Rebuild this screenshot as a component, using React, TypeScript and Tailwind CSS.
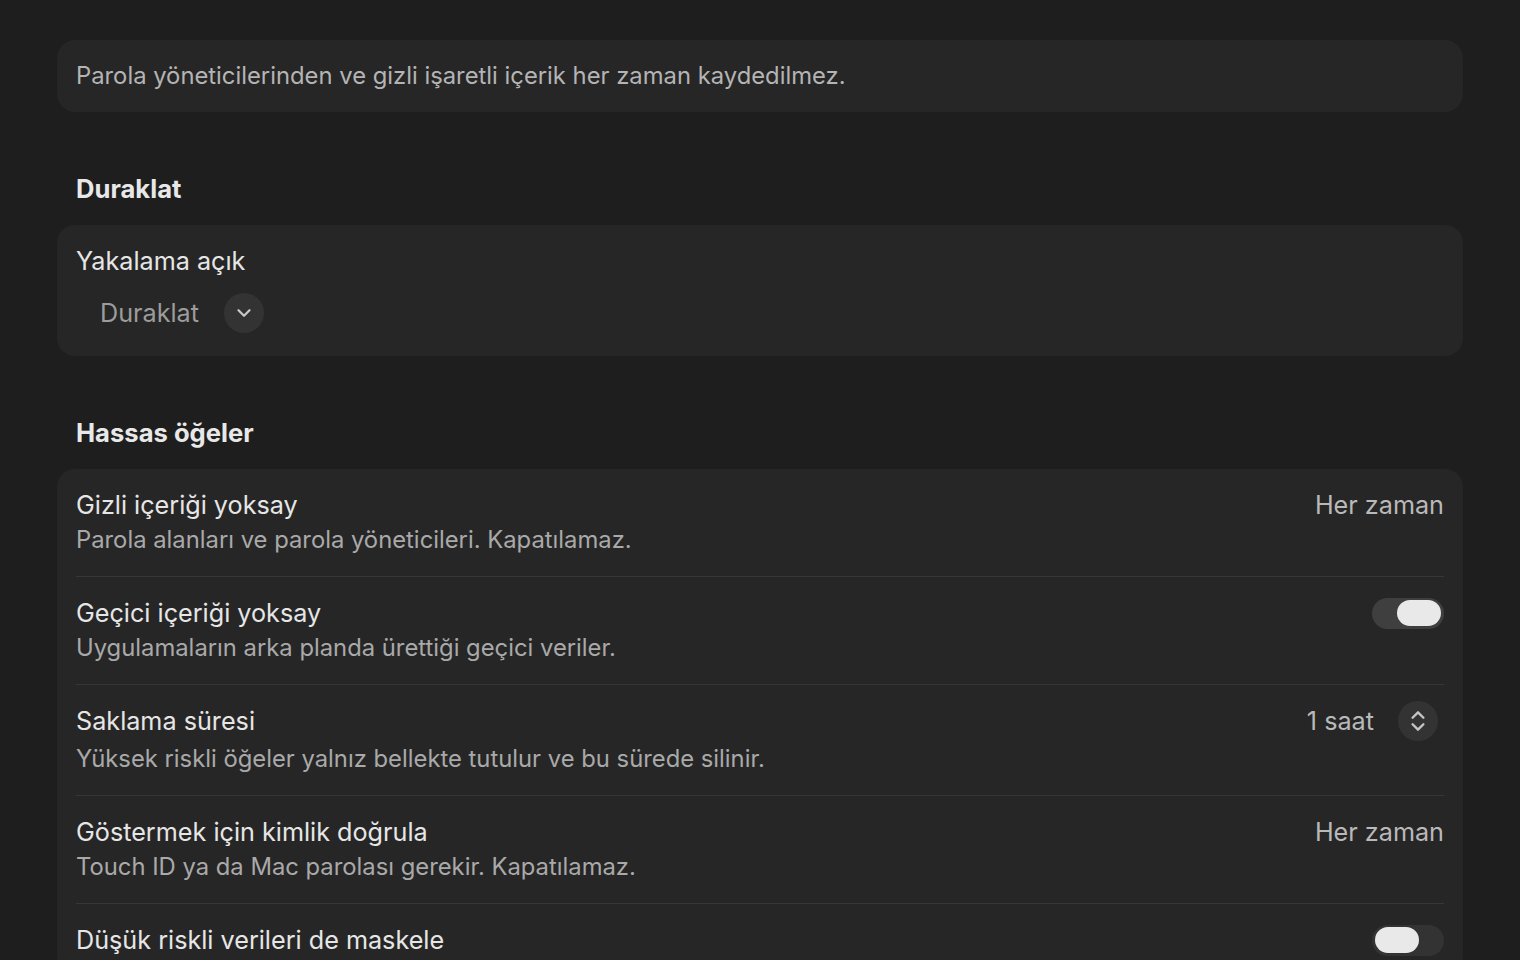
import { ChevronDown, ChevronsUpDown } from "lucide-react";

type Row = {
  title: string;
  subtitle?: string;
  right?: "always" | "on" | "off" | "stepper";
};

const ROWS: Row[] = [
  { title: "Gizli içeriği yoksay", subtitle: "Parola alanları ve parola yöneticileri. Kapatılamaz.", right: "always" },
  { title: "Geçici içeriği yoksay", subtitle: "Uygulamaların arka planda ürettiği geçici veriler.", right: "on" },
  { title: "Saklama süresi", subtitle: "Yüksek riskli öğeler yalnız bellekte tutulur ve bu sürede silinir.", right: "stepper" },
  { title: "Göstermek için kimlik doğrula", subtitle: "Touch ID ya da Mac parolası gerekir. Kapatılamaz.", right: "always" },
  { title: "Düşük riskli verileri de maskele", right: "off" },
];

function Toggle({ on }: { on: boolean }) {
  return (
    <div
      className={`flex h-[31px] w-[72px] items-center rounded-full px-[3px] ${
        on ? "justify-end bg-[#3f3f3f]" : "justify-start bg-[#333333]"
      }`}
    >
      <div className="h-[26px] w-[44px] rounded-full bg-[#e9e9e9]" />
    </div>
  );
}

function RightSide({ kind }: { kind: Row["right"] }) {
  if (kind === "always")
    return <span className="text-[25.2px] leading-[32px] text-[#b9b9b9]">Her zaman</span>;
  if (kind === "on" || kind === "off")
    return (
      <div className="flex h-[32px] items-center">
        <Toggle on={kind === "on"} />
      </div>
    );
  if (kind === "stepper")
    return (
      <div className="flex h-[32px] items-center gap-[24px] pr-[6px]">
        <span className="text-[25.2px] leading-[32px] text-[#b9b9b9]">1 saat</span>
        <button
          type="button"
          className="flex h-[40px] w-[40px] items-center justify-center rounded-full bg-[#333333] text-[#c4c4c4]"
        >
          <ChevronsUpDown size={26} strokeWidth={2.2} />
        </button>
      </div>
    );
  return null;
}

export default function App() {
  return (
    <div
      className="min-h-screen w-full bg-[#1e1e1e] px-[57px] pt-[40px] pb-10"
      style={{ fontFamily: "Inter, 'Noto Sans', sans-serif" }}
    >
      <div className="rounded-[18px] bg-[#262626] px-[19px] py-[21px]">
        <p className="text-[23.8px] leading-[30px] text-[#b4b4b4]">
          Parola yöneticilerinden ve gizli işaretli içerik her zaman kaydedilmez.
        </p>
      </div>

      <h2 className="mt-[61px] px-[19px] text-[25.6px] font-bold leading-[32px] text-[#e8e8e8]">
        Duraklat
      </h2>
      <div className="mt-[20px] rounded-[18px] bg-[#262626] px-[19px] pt-[20px] pb-[23px]">
        <p className="text-[25.2px] leading-[32px] text-[#e6e6e6]">Yakalama açık</p>
        <div className="mt-[16px] flex items-center gap-[25px] pl-[24px]">
          <span className="text-[25.2px] leading-[32px] text-[#9c9c9c]">Duraklat</span>
          <button
            type="button"
            className="flex h-[40px] w-[40px] items-center justify-center rounded-full bg-[#333333] text-[#c8c8c8]"
          >
            <ChevronDown size={22} strokeWidth={2.5} />
          </button>
        </div>
      </div>

      <h2 className="mt-[61px] px-[19px] text-[25.6px] font-bold leading-[32px] text-[#e8e8e8]">
        Hassas öğeler
      </h2>
      <div className="mt-[20px] rounded-[18px] bg-[#262626] px-[19px]">
        {ROWS.map((row, i) => (
          <div
            key={row.title}
            className={`flex items-start justify-between gap-6 pt-[20px] pb-[20px] ${
              i > 0 ? "border-t border-[#363636]" : ""
            }`}
          >
            <div>
              <p className="text-[25.2px] leading-[32px] text-[#e6e6e6]">{row.title}</p>
              {row.subtitle ? (
                <p
                  className={`text-[23.8px] leading-[32px] text-[#a9a9a9] ${
                    row.right === "stepper" ? "mt-[6px]" : "mt-[3px]"
                  }`}
                >
                  {row.subtitle}
                </p>
              ) : null}
            </div>
            <RightSide kind={row.right} />
          </div>
        ))}
      </div>
    </div>
  );
}
